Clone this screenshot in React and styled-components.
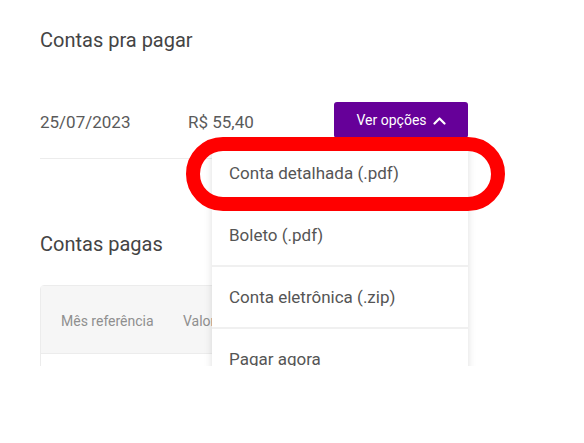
import React from "react";
import styled, { createGlobalStyle } from "styled-components";

const Global = createGlobalStyle`
  html, body { margin: 0; padding: 0; background: #fff; }
  body { font-family: Roboto, "Liberation Sans", Arial, sans-serif; }
`;

const Page = styled.div`
  position: relative;
  height: 366px;
  overflow: hidden;
  padding-left: 40px;
`;

const Column = styled.div`
  width: 428px;
`;

const SectionTitle = styled.h2`
  margin: ${(p) => p.$top}px 0 0;
  font-size: 20px;
  line-height: 24px;
  font-weight: 400;
  color: #444;
`;

const BillRow = styled.div`
  margin-top: 32px;
  display: flex;
  align-items: center;
  padding: 18px 0 20px;
  border-bottom: 1px solid #ececec;
`;

const Cell = styled.span`
  width: ${(p) => p.$w}px;
  font-size: 17px;
  color: #5a5a5a;
  line-height: 24px;
  padding-top: 4px;
`;

const Spacer = styled.div`
  flex: 1;
`;

const MenuWrap = styled.div`
  position: relative;
`;

const OptionsButton = styled.button`
  width: 134px;
  height: 36px;
  border: 0;
  border-radius: 3px;
  background: #660099;
  color: #fff;
  font-family: inherit;
  font-size: 14px;
  display: flex;
  align-items: center;
  justify-content: center;
  gap: 6px;
  padding: 0;
`;

const Dropdown = styled.ul`
  position: absolute;
  top: calc(100% + 5px);
  right: 0;
  width: 256px;
  margin: 0;
  padding: 0;
  list-style: none;
  background: #fff;
  box-shadow: 0 2px 8px rgba(0, 0, 0, 0.13);
  z-index: 2;
`;

const DropItem = styled.li`
  height: 62px;
  display: flex;
  align-items: center;
  padding-left: 17px;
  font-size: 17px;
  color: #555;
  border-bottom: 2px solid #f0f0f0;
  box-sizing: border-box;
`;

const Table = styled.div`
  margin-top: 29px;
  border: 1px solid #ececec;
  border-radius: 4px 4px 0 0;
  box-sizing: border-box;
`;

const TableHead = styled.div`
  height: 68px;
  background: #f6f6f6;
  border-bottom: 1px solid #ececec;
  display: flex;
  align-items: center;
  padding-left: 20px;
  padding-top: 3px;
  box-sizing: border-box;
`;

const HeadCell = styled.span`
  width: ${(p) => p.$w}px;
  font-size: 14px;
  color: #8f8f8f;
`;

const TableBody = styled.div`
  height: 60px;
`;

const Highlight = styled.div`
  position: absolute;
  left: 186px;
  top: 137px;
  width: 319px;
  height: 74px;
  box-sizing: border-box;
  border: 14px solid #ff0000;
  border-radius: 37px;
  z-index: 5;
  pointer-events: none;
`;

const ChevronUp = () => (
  <svg width="13" height="9" viewBox="0 0 13 9" fill="none">
    <path d="M1.5 7.5L6.5 2.5L11.5 7.5" stroke="#fff" strokeWidth="2.2" strokeLinecap="round" strokeLinejoin="round" />
  </svg>
);

const options = ["Conta detalhada (.pdf)", "Boleto (.pdf)", "Conta eletrônica (.zip)", "Pagar agora"];

export default function App() {
  return (
    <>
      <Global />
      <Page>
        <Column>
          <SectionTitle $top={28}>Contas pra pagar</SectionTitle>
          <BillRow>
            <Cell $w={148}>25/07/2023</Cell>
            <Cell $w={100}>R$ 55,40</Cell>
            <Spacer />
            <MenuWrap>
              <OptionsButton>
                Ver opções <ChevronUp />
              </OptionsButton>
              <Dropdown>
                {options.map((o) => (
                  <DropItem key={o}>{o}</DropItem>
                ))}
              </Dropdown>
            </MenuWrap>
          </BillRow>
          <SectionTitle $top={73}>Contas pagas</SectionTitle>
          <Table>
            <TableHead>
              <HeadCell $w={122}>Mês referência</HeadCell>
              <HeadCell $w={100}>Valor</HeadCell>
            </TableHead>
            <TableBody />
          </Table>
        </Column>
        <Highlight />
      </Page>
    </>
  );
}
